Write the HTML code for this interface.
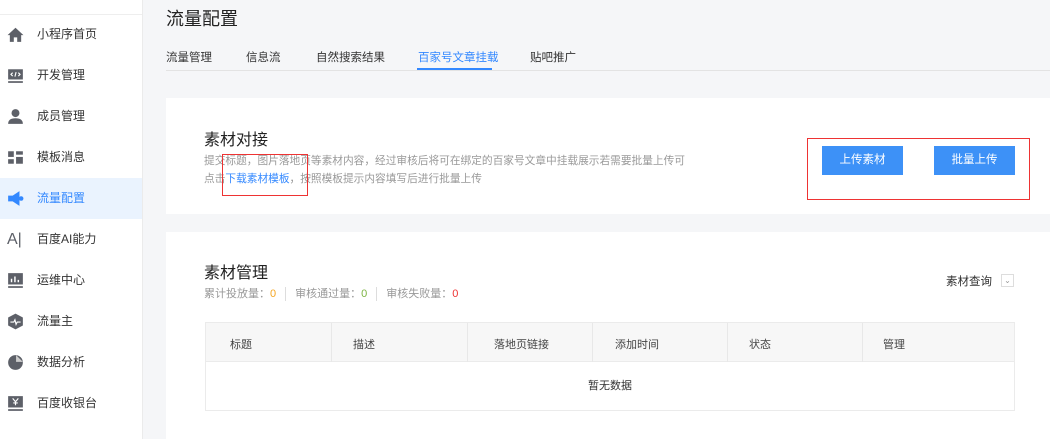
<!DOCTYPE html>
<html><head><meta charset="utf-8"><style>
*{margin:0;padding:0;box-sizing:border-box}
body{width:1050px;height:439px;overflow:hidden;background:#f5f6f8;font-family:"Liberation Sans","Noto Sans CJK SC",sans-serif;position:relative;color:#333}
.side{position:absolute;left:0;top:0;width:143px;height:439px;background:#fff;border-right:1px solid #ebebeb}
.side .top{position:absolute;left:0;top:14px;width:142px;border-top:1px solid #eee}
.item{position:absolute;left:0;width:142px;height:41px;font-size:12px;color:#333;line-height:41px}
.item .t{position:absolute;left:37px}
.item .ic{position:absolute;left:7px;top:12px;width:17px;height:17px}
.item.on{background:#eaf3fe;color:#3388ff}
.abs{position:absolute}
.card{position:absolute;background:#fff;left:166px;width:884px}
.tab{position:absolute;top:49px;font-size:11.5px;color:#333}
</style></head><body>
<div class="side"><div class="top"></div>
<div class="item" style="top:14px"><svg class="ic" viewBox="0 0 15 15"><path d="M0.5 8L7.5 1.5L14.5 8H12.5V14H9V10H6V14H2.5V8Z" fill="#5d6068"/></svg><span class="t">小程序首页</span></div>
<div class="item" style="top:55px"><svg class="ic" viewBox="0 0 15 15"><rect x="1" y="2" width="13" height="9" fill="#5d6068"/><rect x="1" y="12.5" width="13" height="1.5" fill="#5d6068"/><path d="M5 5L3.5 6.5L5 8M10 5L11.5 6.5L10 8M8 4.5L7 8.5" stroke="#fff" fill="none"/></svg><span class="t">开发管理</span></div>
<div class="item" style="top:96px"><svg class="ic" viewBox="0 0 15 15"><circle cx="7.5" cy="4.5" r="3.5" fill="#5d6068"/><path d="M1 14Q1 9 7.5 9Q14 9 14 14Z" fill="#5d6068"/></svg><span class="t">成员管理</span></div>
<div class="item" style="top:137px"><svg class="ic" viewBox="0 0 15 15"><rect x="1" y="2" width="5" height="5" fill="#5d6068"/><rect x="8" y="2" width="6" height="3" fill="#5d6068"/><rect x="1" y="9" width="5" height="4" fill="#5d6068"/><rect x="8" y="7" width="6" height="6" fill="#5d6068"/></svg><span class="t">模板消息</span></div>
<div class="item on" style="top:178px"><svg class="ic" viewBox="0 0 15 15"><path d="M1 5H5L11 1V14L5 10H1Z" fill="#3388ff"/><circle cx="12.5" cy="7.5" r="2" fill="#3388ff"/></svg><span class="t">流量配置</span></div>
<div class="item" style="top:219px"><span class="abs" style="left:7px;top:0;font-size:16px;color:#5d6068">A|</span><span class="t">百度AI能力</span></div>
<div class="item" style="top:260px"><svg class="ic" viewBox="0 0 15 15"><rect x="1" y="1" width="13" height="10" fill="#5d6068"/><rect x="1" y="12.5" width="13" height="1.5" fill="#5d6068"/><path d="M4 9V6M7 9V4M10 9V7" stroke="#fff" stroke-width="1.3"/></svg><span class="t">运维中心</span></div>
<div class="item" style="top:301px"><svg class="ic" viewBox="0 0 15 15"><path d="M7.5 0.5L14 4V11L7.5 14.5L1 11V4Z" fill="#5d6068"/><path d="M3 8H6L7 6L8 10L9 8H12" stroke="#fff" fill="none"/></svg><span class="t">流量主</span></div>
<div class="item" style="top:342px"><svg class="ic" viewBox="0 0 15 15"><circle cx="7.5" cy="7.5" r="6.5" fill="#5d6068"/><path d="M8 1V7H14" fill="#ccc"/></svg><span class="t">数据分析</span></div>
<div class="item" style="top:383px"><svg class="ic" viewBox="0 0 15 15"><rect x="1" y="1" width="13" height="10" fill="#5d6068"/><rect x="1" y="12.5" width="13" height="1.5" fill="#5d6068"/><path d="M5 3L7.5 6L10 3M7.5 6V9M5.5 7H9.5" stroke="#fff" fill="none"/></svg><span class="t">百度收银台</span></div>
</div>

<div class="abs" style="left:166px;top:5px;font-size:18px;color:#222">流量配置</div>
<div class="tab" style="left:166px">流量管理</div>
<div class="tab" style="left:246px">信息流</div>
<div class="tab" style="left:316px">自然搜索结果</div>
<div class="tab" style="left:418px;color:#3388ff">百家号文章挂载</div>
<div class="tab" style="left:530px">贴吧推广</div>
<div class="abs" style="left:166px;top:70px;width:884px;border-top:1px solid #e3e3e3"></div>
<div class="abs" style="left:417px;top:68px;width:75px;height:2px;background:#3388ff"></div>

<div class="card" style="top:98px;height:116px">
<div class="abs" style="left:38px;top:28px;font-size:16px;color:#222">素材对接</div>
<div class="abs" style="left:38px;top:54px;font-size:10.7px;color:#999;line-height:18px">提交标题，图片落地页等素材内容，经过审核后将可在绑定的百家号文章中挂载展示若需要批量上传可<br>点击<span style="color:#3388ff">下载素材模板</span>，按照模板提示内容填写后进行批量上传</div>
<div class="abs" style="left:56px;top:56px;width:86px;height:42px;border:1.5px solid #e33"></div>
<div class="abs" style="left:641px;top:40px;width:223px;height:62px;border:1.5px solid #e33"></div>
<div class="abs" style="left:656px;top:48px;width:81px;height:29px;background:#3d91f7;color:#fff;font-size:11.5px;text-align:center;line-height:29px">上传素材</div>
<div class="abs" style="left:768px;top:48px;width:81px;height:29px;background:#3d91f7;color:#fff;font-size:11.5px;text-align:center;line-height:29px">批量上传</div>
</div>

<div class="card" style="top:232px;height:207px">
<div class="abs" style="left:38px;top:27px;font-size:16px;color:#222">素材管理</div>
<div class="abs" style="left:38px;top:53px;font-size:11px;color:#999">累计投放量：<span style="color:#f5a623">0</span><span style="display:inline-block;width:1px;height:14px;background:#ddd;margin:0 9px;vertical-align:middle"></span>审核通过量：<span style="color:#7cb342">0</span><span style="display:inline-block;width:1px;height:14px;background:#ddd;margin:0 9px;vertical-align:middle"></span>审核失败量：<span style="color:#e33">0</span></div>
<div class="abs" style="left:780px;top:41px;font-size:11.5px;color:#333">素材查询</div>
<div class="abs" style="left:835px;top:42px;width:13px;height:13px;border:1px solid #ddd;font-size:8px;color:#999;text-align:center;line-height:11px">⌄</div>
<div class="abs" style="left:39px;top:90px;width:810px;height:89px;border:1px solid #ebebeb">
<div style="height:39px;background:#f7f7f7;border-bottom:1px solid #ebebeb;position:relative;font-size:11px;color:#444">
<span class="abs" style="left:24px;top:13px">标题</span>
<span class="abs" style="left:147px;top:13px">描述</span>
<span class="abs" style="left:288px;top:13px">落地页链接</span>
<span class="abs" style="left:409px;top:13px">添加时间</span>
<span class="abs" style="left:543px;top:13px">状态</span>
<span class="abs" style="left:677px;top:13px">管理</span>
<span class="abs" style="left:125px;top:0;width:1px;height:39px;background:#e8e8e8"></span>
<span class="abs" style="left:261px;top:0;width:1px;height:39px;background:#e8e8e8"></span>
<span class="abs" style="left:386px;top:0;width:1px;height:39px;background:#e8e8e8"></span>
<span class="abs" style="left:521px;top:0;width:1px;height:39px;background:#e8e8e8"></span>
<span class="abs" style="left:656px;top:0;width:1px;height:39px;background:#e8e8e8"></span>
</div>
<div style="text-align:center;font-size:11px;color:#333;line-height:48px">暂无数据</div>
</div>
</div>
</body></html>
